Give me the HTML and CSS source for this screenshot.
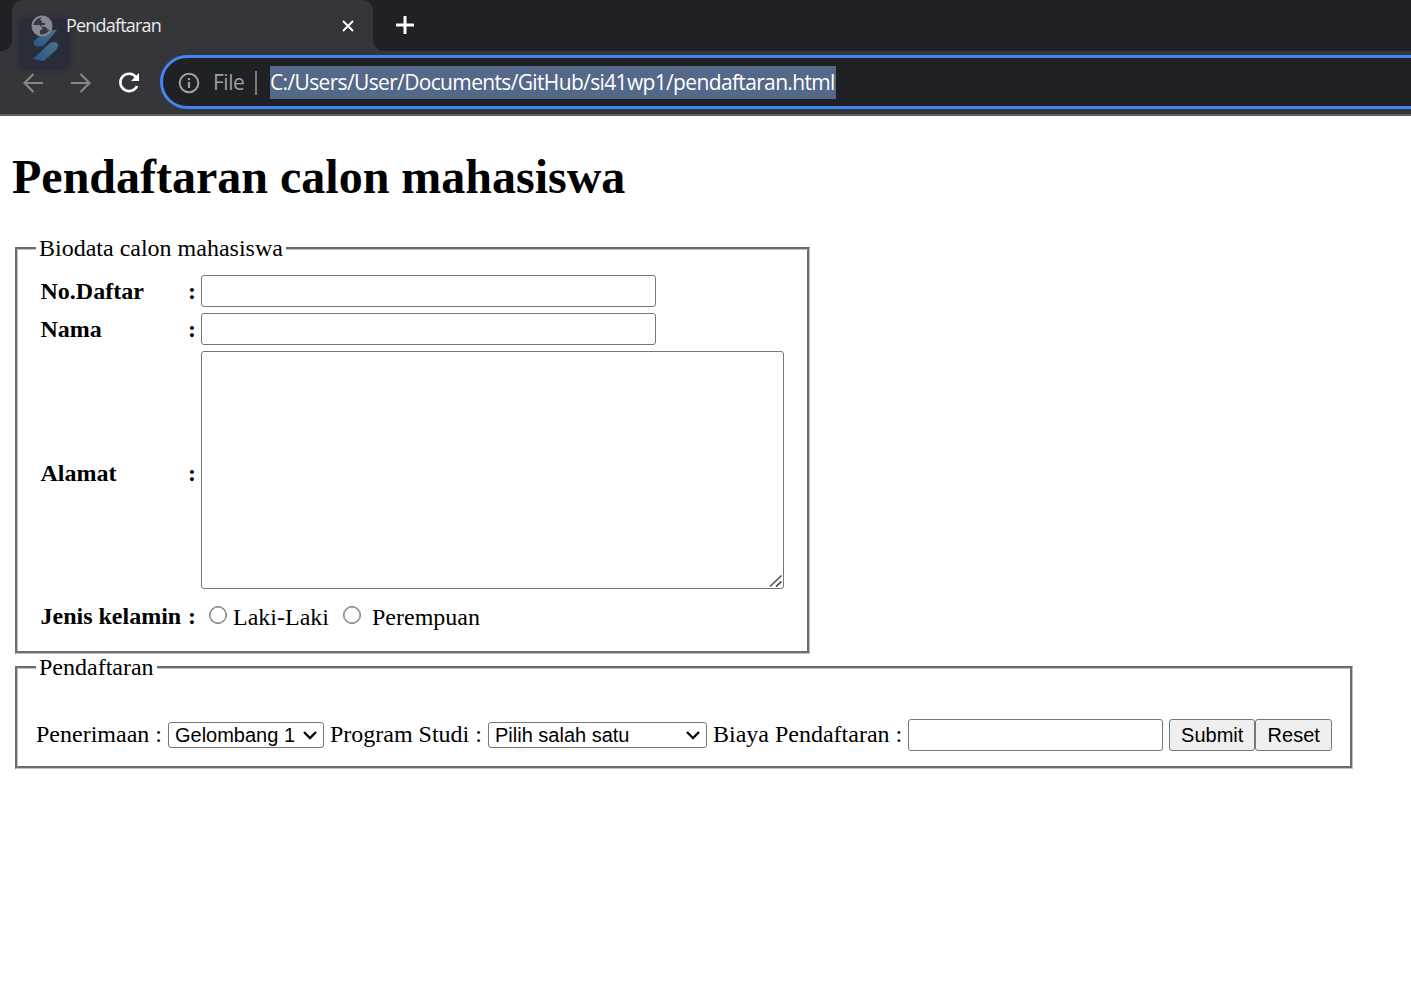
FILE: index.html
```html
<!DOCTYPE html>
<html lang="id">
<head>
<meta charset="utf-8">
<title>Pendaftaran</title>
<link rel="stylesheet" href="styles.css">
</head>
<body>
<header class="browser">
  <div class="tabstrip">
    <div class="tab">
      <svg class="globe" viewBox="0 0 22 22"><circle cx="11" cy="11" r="9.500" fill="#343741" stroke="#858991" stroke-width="2"/><path d="M2 10h6l3 2v3H9v5C4 19 1 15 2 10zM11 2h4l5 6v6l-3 1-2-3h-3l-2-2h4V8h-3V6l-2-1z" fill="#858991"/></svg>
      <span class="tab-title">Pendaftaran</span>
      <svg class="close" viewBox="0 0 12 12"><path d="M1 1l10 10M11 1L1 11" stroke="#fff" stroke-width="2"/></svg>
    </div>
    <svg class="plus" viewBox="0 0 18 18"><path d="M9 1v16M1 9h16" stroke="#fff" stroke-width="3" stroke-linecap="round"/></svg>
  </div>
  <div class="toolbar">
    <svg class="nav" viewBox="0 0 20 20"><path d="M20 10H1.500M10.500 1l-9 9 9 9" fill="none" stroke="#85868a" stroke-width="2.200"/></svg>
    <svg class="nav forward" viewBox="0 0 20 20"><path d="M0 10h18.500M9.500 1l9 9-9 9" fill="none" stroke="#85868a" stroke-width="2.200"/></svg>
    <svg class="reload" viewBox="0 0 22 22"><path d="M18 5.200A8.700 8.700 0 1 0 19 14" fill="none" stroke="#fff" stroke-width="2.600"/><path d="M21 1v8h-8z" fill="#fff"/></svg>
    <div class="omnibox">
      <svg class="info" viewBox="0 0 22 22"><circle cx="11" cy="11" r="9.300" fill="none" stroke="#9aa0a6" stroke-width="2"/><path d="M11 10v6M11 6v2.200" stroke="#9aa0a6" stroke-width="2.200"/></svg>
      <span class="scheme">File</span>
      <span class="divider"></span>
      <span class="url">C:/Users/User/Documents/GitHub/si41wp1/pendaftaran.html</span>
    </div>
  </div>
  <svg class="overlay" viewBox="0 0 60 60"><defs><linearGradient id="blue" x1="0" y1="1" x2="1" y2="0"><stop offset="0" stop-color="#285887"/><stop offset="1" stop-color="#4d7188"/></linearGradient></defs><rect width="60" height="60" rx="12" fill="#323338"/><rect x="4" y="4" width="52" height="52" rx="9" fill="#2a2d37"/><path d="M42 16h-9c-6 5-14 9-14.500 13 0 2 1.500 3.500 4 3.500l6-.5z" fill="url(#blue)"/><path d="M18 45l17-16c4-2 8-1 8 2 0 2-1 4-3 6L29 47z" fill="url(#blue)"/></svg>
</header>
<main>
  <h1>Pendaftaran calon mahasiswa</h1>
  <form>
    <fieldset class="biodata">
      <legend>Biodata calon mahasiswa</legend>
      <div class="fields">
        <b>No.Daftar</b><b>:</b><input class="wide" type="text">
        <b>Nama</b><b>:</b><input class="wide" type="text">
        <b class="address">Alamat</b><b class="address">:</b>
        <div class="area"><textarea></textarea><svg class="grip" viewBox="0 0 14 14"><path d="M1 12.500L12.500 1.500M7 12.500L12.500 7.500" stroke="#555" stroke-width="1.700"/></svg></div>
        <b>Jenis kelamin</b><b>:</b>
        <div class="gender"><input type="radio" name="jk"><span class="male">Laki-Laki</span><input type="radio" name="jk"><span class="female">Perempuan</span></div>
      </div>
    </fieldset>
    <fieldset class="registration">
      <legend>Pendaftaran</legend>
      <div class="line">
        <span class="caption">Penerimaan :</span>
        <div class="select wave"><select><option>Gelombang 1</option></select><svg class="chevron" viewBox="0 0 14 9"><path d="M1 1l6 6 6-6" fill="none" stroke="#000" stroke-width="2.300"/></svg></div>
        <span class="caption">Program Studi :</span>
        <div class="select study"><select><option>Pilih salah satu</option></select><svg class="chevron" viewBox="0 0 14 9"><path d="M1 1l6 6 6-6" fill="none" stroke="#000" stroke-width="2.300"/></svg></div>
        <span class="caption">Biaya Pendaftaran :</span>
        <input class="fee" type="text">
        <div class="buttons"><button class="submit" type="button">Submit</button><button class="reset" type="reset">Reset</button></div>
      </div>
    </fieldset>
  </form>
</main>
</body>
</html>
```
FILE: styles.css
```css
* { box-sizing: border-box; }
body { margin: 0; background: #fff; color: #000; font: 24px/27px "Liberation Serif", serif; overflow: hidden; }
svg { display: block; flex: none; }
.browser { position: relative; height: 116px; background: #35363a; border-bottom: 2px solid #5f6062; font-family: "Open Sans", sans-serif; overflow: hidden; }
.tabstrip { display: flex; height: 51px; align-items: flex-start; background: linear-gradient(#202124, #202124) 0 0 / 100% 36px no-repeat, #35363a; }
.tabstrip::before { content: ""; width: 12px; height: 51px; background: #202124; border-bottom-right-radius: 11px; flex: none; }
.tabstrip::after { content: ""; order: 1; flex: 1; height: 51px; background: #202124; border-bottom-left-radius: 11px; }
.tab { display: flex; align-items: center; width: 361px; height: 51px; padding-left: 19px; background: #35363a; border-radius: 11px 11px 0 0; }
.plus { order: 2; position: absolute; left: 396px; top: 16px; width: 18px; height: 18px; }
.globe { position: relative; z-index: 2; width: 22px; height: 22px; }
.tab-title { position: relative; z-index: 2; width: 95px; margin-left: 13px; font-size: 18px; line-height: 23px; letter-spacing: -.8px; color: #e8eaed; white-space: nowrap; }
.close { width: 12px; height: 12px; margin-left: 181px; }
.toolbar { display: flex; align-items: center; height: 62px; padding-left: 23px; }
.nav { position: relative; z-index: 2; width: 20px; height: 20px; }
.forward { margin-left: 28px; }
.reload { width: 22px; height: 22px; margin-left: 27px; }
.nav, .reload, .info, .divider, .scheme { margin-top: 1px; }
.omnibox { display: flex; align-items: center; flex: none; width: 1290px; height: 54px; margin-left: 20px; padding-left: 15px; border: 3px solid #4285f4; border-radius: 27px; background: #202124; font-size: 21px; line-height: 33px; white-space: nowrap; }
.info { width: 22px; height: 22px; margin-top: 2px; }
.scheme { width: 31px; margin-left: 13px; color: #9aa0a6; letter-spacing: -.5px; }
.divider { width: 2px; height: 24px; margin-left: 11px; background: #77797c; }
.url { width: 566px; height: 33px; margin-left: 13px; background: #546889; color: #fff; letter-spacing: -.65px; }
.overlay { position: absolute; z-index: 1; left: 15px; top: 14px; width: 60px; height: 60px; }
main { padding: 34px 0 0 12px; }
h1 { margin: 0 0 31px; font-size: 48px; line-height: 54px; font-weight: bold; }
fieldset { margin: 0 0 0 3px; padding: 0 18px; border: 3px groove #c0c0c0; }
legend { height: 27px; padding: 0 3px; }
.biodata { width: 795px; height: 419px; }
.registration { width: 1338px; height: 115px; }
.fields { display: grid; grid-template-columns: 147.5px 13px 583px; grid-template-rows: 32px 32px 238px 43px; row-gap: 6px; align-items: center; margin: 13px 0 0 4.5px; }
input, textarea, select, button { margin: 0; border: 1px solid #767676; border-radius: 3px; font: 20px "Liberation Sans", sans-serif; }
input[type="text"] { height: 32px; background: #fff; }
.wide { width: 455px; }
.address { padding-top: 6px; }
.area { position: relative; height: 238px; }
textarea { display: block; width: 583px; height: 238px; resize: none; }
.grip { position: absolute; right: 1px; bottom: 1px; width: 14px; height: 14px; }
.gender { display: flex; align-items: center; padding-left: 8px; }
input[type="radio"] { appearance: none; width: 18px; height: 18px; margin-top: -4px; border: 1.5px solid #767676; border-radius: 50%; box-shadow: inset 0 0 0 .5px #767676; }
.male { width: 96px; margin: 1px 14px 0 6px; }
.female { margin: 1px 0 0 11px; }
.line { display: flex; align-items: center; gap: 6px; height: 32px; margin-top: 38px; white-space: pre; }
.caption { padding-bottom: 2px; }
.select { position: relative; height: 26px; }
select { display: block; appearance: none; width: 100%; height: 26px; padding: 0 6px; background: #fff; color: #000; }
.wave { width: 156px; }
.study { width: 219px; }
.chevron { position: absolute; right: 7px; top: 9px; width: 14px; height: 9px; pointer-events: none; }
.fee { width: 255px; }
.buttons { display: flex; }
button { height: 32px; padding: 0; background: #efefef; color: #000; }
.submit { width: 86px; }
.reset { width: 77px; }
```
